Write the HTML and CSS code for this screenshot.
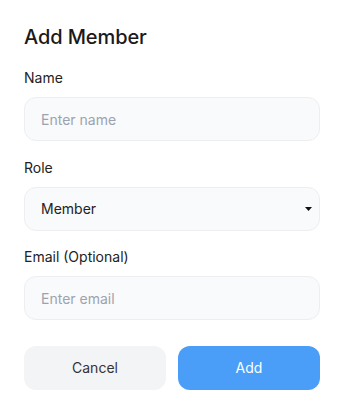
FILE: index.html
```html
<!DOCTYPE html>
<html>
<head>
<meta charset="utf-8">
<link rel="stylesheet" href="styles.css">
</head>
<body>
<div class="dialog">
  <h1 class="title">Add Member</h1>
  <div class="field">
    <label class="label">Name</label>
    <div class="input placeholder">Enter name</div>
  </div>
  <div class="field">
    <label class="label">Role</label>
    <div class="input select">
      <span>Member</span>
      <svg class="caret" width="7" height="4" viewBox="0 0 7 4"><path d="M0 0 L7 0 L3.5 4 Z" fill="#111"/></svg>
    </div>
  </div>
  <div class="field">
    <label class="label">Email (Optional)</label>
    <div class="input placeholder">Enter email</div>
  </div>
  <div class="actions">
    <button class="btn cancel">Cancel</button>
    <button class="btn add">Add</button>
  </div>
</div>
</body>
</html>
```
FILE: styles.css
```css
* { box-sizing: border-box; }
html, body { margin: 0; background: #fff; }
body { font-family: Inter, "Noto Sans", sans-serif; color: #1f1f1f; }
.dialog { padding: 23px 24px 24px 24px; display: flex; flex-direction: column; }
.title { margin: 0 0 17px 0; font-size: 20px; line-height: 28px; font-weight: 450; color: #1a1a1a; letter-spacing: -0.1px; }
.field { display: flex; flex-direction: column; margin-bottom: 16.5px; }
.label { font-size: 14px; line-height: 20px; margin-bottom: 9px; color: #222; }
.input { height: 44px; border: 1px solid #eceef1; background: #f9fafb; border-radius: 12px; padding: 0 16px; display: flex; align-items: center; font-size: 14px; }
.placeholder { color: #9ca3af; }
.select { justify-content: space-between; color: #222; padding-right: 7px; }
.caret { display: block; }
.actions { display: flex; gap: 12px; margin-top: 9px; }
.btn { flex: 1; height: 44px; border: none; border-radius: 12px; font-family: inherit; font-size: 14px; }
.cancel { background: #f3f4f6; color: #333; }
.add { background: #4a9ef8; color: #fff; }
```
